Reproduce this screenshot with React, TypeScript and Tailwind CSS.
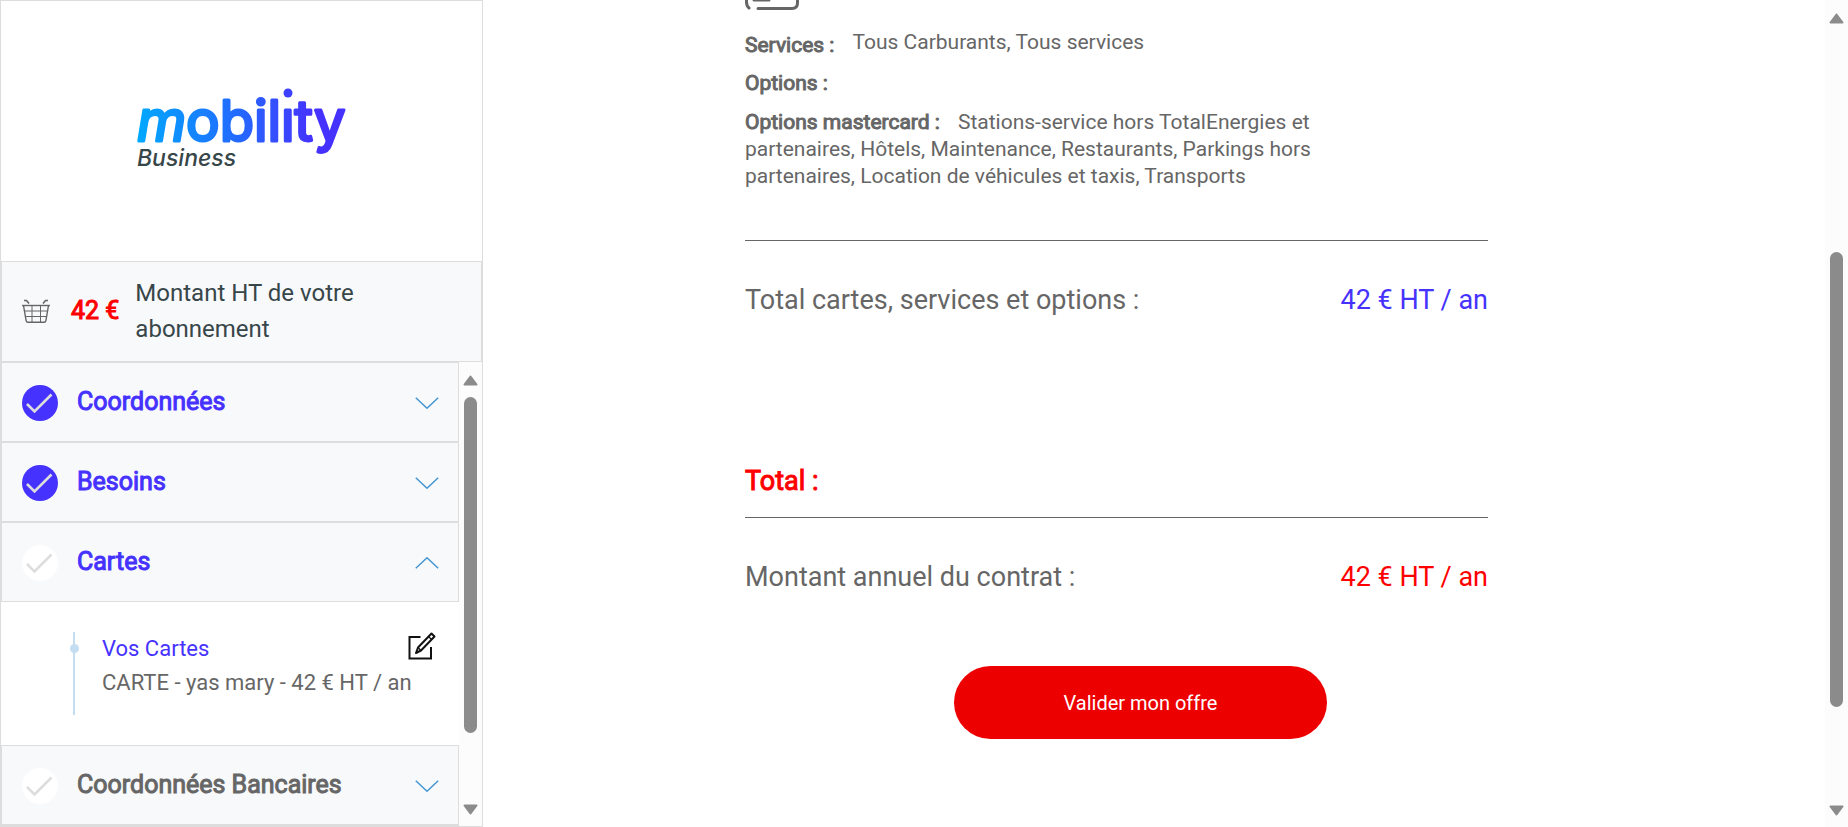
import { useState } from "react";
import type { ReactNode } from "react";

function Logo() {
  return (
    <svg viewBox="0 0 230 100" className="h-[100px] w-[230px]" role="img" aria-label="Mobility Business">
      <defs>
        <linearGradient id="brand" gradientUnits="userSpaceOnUse" x1="8" y1="0" x2="218" y2="0">
          <stop offset="0" stopColor="#00aaff" />
          <stop offset="0.5" stopColor="#2468ff" />
          <stop offset="0.85" stopColor="#4632ff" />
          <stop offset="1" stopColor="#4632ff" />
        </linearGradient>
      </defs>
      <text
        x="10"
        y="65"
        fontFamily="Inter, sans-serif"
        fontSize="56"
        fill="url(#brand)"
        stroke="url(#brand)"
        strokeWidth="3"
        strokeLinejoin="round"
      >
        <tspan fontStyle="italic">m</tspan>
        <tspan>obility</tspan>
      </text>
      <rect x="155.500" y="18" width="11" height="13.500" fill="#ffffff" />
      <circle cx="161" cy="17" r="4.5" fill="#3d40ff" />
      <text x="10" y="90" fontFamily="Inter, sans-serif" fontSize="23" fontStyle="italic" fontWeight="500" fill="#374649">
        Business
      </text>
    </svg>
  );
}

function BasketIcon() {
  return (
    <svg viewBox="0 0 28 24" className="h-6 w-7 shrink-0" fill="none" stroke="#666" aria-hidden="true">
      <path d="M0 6.5h28" strokeWidth="1.4" />
      <path d="M1.5 6.5l2.6 15.2q.3 1.6 1.8 1.6h16.2q1.5 0 1.8-1.6l2.6-15.2" strokeWidth="1.4" />
      <path d="M2.5 12h23M3.5 17.5h21M10 6.5v16.5M18.5 6.5v16.5" strokeWidth="1" />
      <path d="M2 1.5h2.5l2.5 3M26 1.5h-2.5l-2.5 3" strokeWidth="1.6" />
    </svg>
  );
}

function CheckDisc({ done }: { done: boolean }) {
  return (
    <svg viewBox="0 0 36 36" className="size-9 shrink-0" aria-hidden="true">
      <circle cx="18" cy="18" r="18" fill={done ? "#4632ff" : "#ffffff"} />
      <path d="M5 19l7.5 7.5L29.5 9.500" fill="none" stroke="#dddddd" strokeWidth="2.6" />
    </svg>
  );
}

function Chevron({ up }: { up?: boolean }) {
  return (
    <svg viewBox="0 0 24 12" className="h-3 w-6 shrink-0" fill="none" stroke="#4496d3" strokeWidth="1.5" aria-hidden="true">
      <path d={up ? "M.8 11.300L12 .8l11.200 10.500" : "M.8 .7L12 11.200L23.200 .7"} />
    </svg>
  );
}

function EditIcon() {
  return (
    <svg viewBox="0 0 28 28" className="size-7" fill="none" stroke="#111" strokeWidth="2" aria-hidden="true">
      <path d="M12.500 5H1.500v21.500H23V15" />
      <path d="M23.500 1.500l3 3L13 18.500l-5 2.500 2-5.500z" strokeLinejoin="round" />
      <path d="M20.500 4.500l3 3M10 15.500l3 3" strokeWidth="1.300" />
    </svg>
  );
}

function ScrollArrow({ down }: { down?: boolean }) {
  return (
    <svg viewBox="0 0 15 11" className="h-[11px] w-[15px] shrink-0" fill="#8b8b8b" stroke="#8b8b8b" strokeWidth="2" strokeLinejoin="round" aria-hidden="true">
      <path d={down ? "M1.500 1.500h12L7.500 9.500z" : "M1.500 9.500h12L7.500 1.500z"} />
    </svg>
  );
}

function SectionHeader({
  title,
  done,
  open,
  muted,
  onToggle,
}: {
  title: string;
  done: boolean;
  open: boolean;
  muted?: boolean;
  onToggle: () => void;
}) {
  return (
    <button
      type="button"
      aria-expanded={open}
      onClick={onToggle}
      className="flex h-20 w-full shrink-0 items-center border border-[#dddddd] bg-[#f8f9fb] pt-0.5 pr-[19px] pl-5 text-left"
    >
      <CheckDisc done={done} />
      <span
        className={`grow pb-0.5 pl-[19px] text-[25px] leading-9 [-webkit-text-stroke:1px] ${muted ? "text-[#666666]" : "text-[#4632ff]"}`}
      >
        {title}
      </span>
      <Chevron up={open} />
    </button>
  );
}

function Label({ children }: { children: ReactNode }) {
  return <span className="pr-[18px] [-webkit-text-stroke:1px]">{children}</span>;
}

function AmountRow({ label, amount, tone }: { label: string; amount: string; tone: string }) {
  return (
    <div className="flex items-center justify-between border-t border-[#666666] pt-[41px] text-[27px] leading-9">
      <span>{label}</span>
      <span className={tone}>{amount}</span>
    </div>
  );
}

export default function App() {
  const [open, setOpen] = useState("Cartes");
  const toggle = (name: string) => setOpen(open === name ? "" : name);

  return (
    <div className="flex h-screen overflow-hidden bg-white font-[Roboto,sans-serif] text-[#666666]">
      <aside className="flex w-[483px] shrink-0 flex-col border border-[#dddddd]">
        <div className="flex h-[260px] shrink-0 justify-center pt-[75px]">
          <Logo />
        </div>
        <div className="flex shrink-0 items-center border border-[#dddddd] bg-[#f8f9fb] pt-[13px] pr-24 pb-[14px] pl-5">
          <BasketIcon />
          <strong className="shrink-0 pl-[21px] text-[25px] font-normal text-[#ff0000] [-webkit-text-stroke:1px]">42 €</strong>
          <span className="pl-4 text-2xl leading-9 text-[#374649]">Montant HT de votre abonnement</span>
        </div>
        <div className="flex min-h-0 grow">
          <nav className="flex grow flex-col overflow-hidden">
            <SectionHeader title="Coordonnées" done open={open === "Coordonnées"} onToggle={() => toggle("Coordonnées")} />
            <SectionHeader title="Besoins" done open={open === "Besoins"} onToggle={() => toggle("Besoins")} />
            <SectionHeader title="Cartes" done={false} open={open === "Cartes"} onToggle={() => toggle("Cartes")} />
            {open === "Cartes" && (
              <div className="flex h-[143px] shrink-0 pt-[30px] pr-[23px] pl-[69px]">
                <div className="flex h-[83px] w-[9px] shrink-0 justify-center">
                  <svg viewBox="0 0 9 83" className="h-full w-full" fill="#c5ddf0" aria-hidden="true">
                    <path d="M3 0h2v83H3z" />
                    <circle cx="4.500" cy="16.500" r="4.500" />
                  </svg>
                </div>
                <div className="grow pl-[23px] text-[22px] leading-[34px]">
                  <div className="flex items-start justify-between">
                    <a href="#cartes" className="text-[#4632ff]">Vos Cartes</a>
                    <button type="button" aria-label="Modifier vos cartes">
                      <EditIcon />
                    </button>
                  </div>
                  <p className="whitespace-nowrap">CARTE - yas mary - 42 € HT / an</p>
                </div>
              </div>
            )}
            <SectionHeader
              title="Coordonnées Bancaires"
              done={false}
              muted
              open={open === "Coordonnées Bancaires"}
              onToggle={() => toggle("Coordonnées Bancaires")}
            />
            <div className="grow bg-[#dddddd]" />
          </nav>
          <div className="flex w-[23px] shrink-0 flex-col items-center bg-[#fcfcfc] pt-[13px] pb-[11px]">
            <ScrollArrow />
            <div className="flex w-full grow justify-center pt-[11px]">
              <div className="h-[336px] w-[13px] rounded-full bg-[#8b8b8b]" />
            </div>
            <ScrollArrow down />
          </div>
        </div>
      </aside>

      <main className="min-w-0 grow overflow-hidden pr-[337px] pl-[262px]">
        <svg viewBox="0 0 54 10" className="h-[10px] w-[54px]" fill="none" stroke="#666666" strokeWidth="3" strokeLinecap="round" aria-hidden="true">
          <path d="M1.500 0v2q0 4 2.500 6M13 8.500h34q5.500 0 5.500-5.500V0M9 0h15" />
        </svg>
        <dl className="w-[580px] max-w-full text-[21px] leading-[27px]">
          <div className="flex items-start pt-[19px]">
            <dt className="pt-[3px]"><Label>Services :</Label></dt>
            <dd>Tous Carburants, Tous services</dd>
          </div>
          <div className="pt-[11px]">
            <dt><Label>Options :</Label></dt>
          </div>
          <div className="pt-3">
            <dt className="inline"><Label>Options mastercard :</Label></dt>
            <dd className="inline">
              Stations-service hors TotalEnergies et partenaires, Hôtels, Maintenance, Restaurants, Parkings hors
              partenaires, Location de véhicules et taxis, Transports
            </dd>
          </div>
        </dl>

        <section className="pt-[50px]">
          <AmountRow label="Total cartes, services et options :" amount="42 € HT / an" tone="text-[#4632ff]" />
        </section>

        <section className="pt-[145px]">
          <h2 className="pb-[18px] text-[27px] leading-9 text-[#ff0000] [-webkit-text-stroke:1px]">Total :</h2>
          <AmountRow label="Montant annuel du contrat :" amount="42 € HT / an" tone="text-[#ff0000]" />
        </section>

        <div className="flex justify-center pt-[71px] pl-12">
          <button type="button" className="h-[73px] w-[373px] rounded-full bg-[#ed0000] text-xl text-white">
            Valider mon offre
          </button>
        </div>
      </main>

      <div className="flex w-[23px] shrink-0 flex-col items-center bg-[#fcfcfc] pt-[13px] pb-[11px]">
        <ScrollArrow />
        <div className="flex w-full grow flex-col items-center pt-[228px]">
          <div className="h-[455px] w-[13px] rounded-full bg-[#8b8b8b]" />
        </div>
        <ScrollArrow down />
      </div>
    </div>
  );
}
